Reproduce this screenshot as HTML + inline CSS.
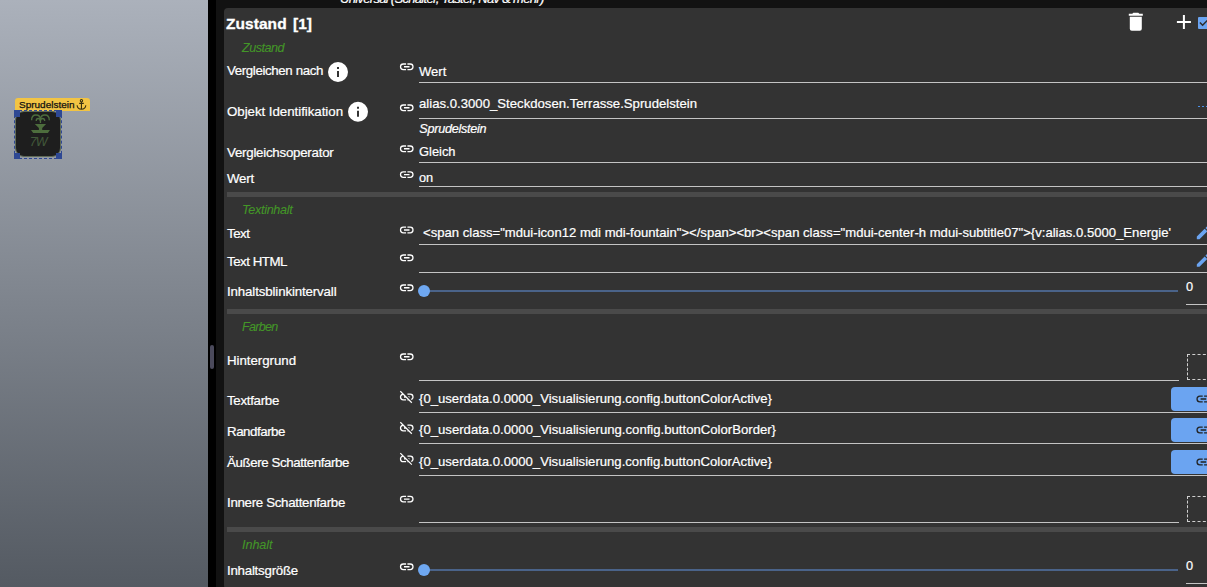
<!DOCTYPE html>
<html lang="de"><head><meta charset="utf-8"><title>Zustand</title>
<style>
html,body{margin:0;padding:0;}
body{width:1207px;height:587px;overflow:hidden;position:relative;background:#121212;font-family:"Liberation Sans",sans-serif;}
.abs,.t,.ic,.ln,.sep{position:absolute;}
.canvas{left:0;top:0;width:208px;height:587px;background:linear-gradient(to bottom,#abb1bb 0%,#545a62 100%);}
.bar{left:208px;top:0;width:8px;height:587px;background:#000;}
.thumb{left:210px;top:345px;width:4px;height:24px;border-radius:2px;background:#4b4a5c;}
.panel{left:224px;top:8px;width:990px;height:581px;background:#333;border-radius:4px;}
.t{white-space:pre;line-height:20px;height:20px;color:#fff;-webkit-text-stroke:0.22px currentColor;}
.lbl{}
.val{}
.sec{color:#439628;font-style:italic;-webkit-text-stroke:0.1px currentColor;}
.it{font-style:italic;}
.b{font-weight:bold;}
.ln{height:1px;background:#c4c4c4;}
.sep{left:227px;width:990px;height:5px;background:#4a4a4a;}
.track{position:absolute;height:2px;background:#4a6389;}
.knob{position:absolute;width:12px;height:12px;border-radius:50%;background:#6fa8f1;}
.btn{position:absolute;left:1171px;width:50px;height:24px;border-radius:4px;background:#6ba4f1;}
.dash{position:absolute;left:1187px;width:40px;height:26px;border:1px dashed #d0d0d0;box-sizing:border-box;}
</style></head>
<body>
<div class="abs canvas"></div>
<div class="abs bar"></div><div class="abs thumb"></div>
<div class="t it" style="left:340px;top:-11px;font-size:13px;letter-spacing:-0.698px;">Universal (Schalter, Taster, Nav &amp; mehr)</div>
<div class="abs panel"></div>
<div class="abs" style="left:15px;top:98px;width:75px;height:13px;background:#f2c443;border-radius:3px 3px 0 0;"></div>
<div class="t " style="left:18.8px;top:95px;font-size:9.3px;transform:scaleX(1.0738) translateY(-0.45px);transform-origin:0 50%;color:#111;-webkit-text-stroke:0.25px #111;">Sprudelstein</div>
<svg class="ic" style="left:0;top:0;width:208px;height:587px;" viewBox="0 0 208 587"><g fill="none" stroke="#3a3210" stroke-width="1.1"><circle cx="81.45" cy="100.65" r="1.15"/><path d="M81.45,101.9V109.2M79.2,103.4H83.8M77.1,105.2C77.3,107.7 79.1,109.1 81.45,109.1C83.8,109.1 85.6,107.7 85.8,105.2"/></g></svg>
<div class="abs" style="left:14px;top:110px;width:48px;height:49px;box-sizing:border-box;border:1px dashed #2e4893;"></div>
<div class="abs" style="left:15px;top:111px;width:46px;height:46px;box-sizing:border-box;background:#1e1e1e;border-radius:9px;border:1px solid #5e6a58;"></div>
<div class="abs" style="left:14px;top:110px;width:6px;height:6.5px;background:#2e4893;"></div>
<div class="abs" style="left:56px;top:110px;width:6px;height:6.5px;background:#2e4893;"></div>
<div class="abs" style="left:14px;top:152.5px;width:6px;height:6.5px;background:#2e4893;"></div>
<div class="abs" style="left:56px;top:152.5px;width:6px;height:6.5px;background:#2e4893;"></div>
<svg class="ic" style="left:0;top:0;width:208px;height:587px;" viewBox="0 0 208 587"><g fill="none" stroke="#4d6d3d" stroke-width="1.3"><path d="M31.6,120.2C31.6,116.6 33.6,115 35.9,115C38.4,115 40.4,116.6 40.4,119.5"/><path d="M49.3,120.2C49.3,116.6 47.3,115 45,115C42.5,115 40.4,116.6 40.4,119.5"/><path d="M36.2,120.9C36.2,119.3 37.2,118.5 38.2,118.5C39.5,118.5 40.4,119.4 40.4,121"/><path d="M44.7,120.9C44.7,119.3 43.7,118.5 42.7,118.5C41.4,118.5 40.4,119.4 40.4,121"/><path d="M40.45,117.6V123"/></g><path fill="#4d6d3d" d="M34.8,124.1H46.1L42.2,127.9V130.1H49.9L47.9,132.9H33.2L31,130.1H38.9V127.9Z"/></svg>
<div class="t it" style="left:29.8px;top:132px;font-size:12.5px;letter-spacing:-0.875px;color:#42593a;-webkit-text-stroke:0;">7W</div>
<div class="t b" style="left:225.9px;top:14px;font-size:15.5px;letter-spacing:0.079px;-webkit-text-stroke:0.3px #fff;word-spacing:1.8px;">Zustand [1]</div>
<div class="abs" style="left:1198px;top:17px;width:12px;height:12px;background:#6ba4f1;border-radius:1px;"></div>
<svg class="ic" style="left:1199px;top:17px;width:12px;height:12px;" viewBox="0 0 12 12"><path d="M0.9,5.5L3.6,8.2L10.6,1.2" fill="none" stroke="#2c2c2c" stroke-width="1.5"/></svg>
<div class="t sec" style="left:242px;top:38px;font-size:12.6px;letter-spacing:-0.502px;">Zustand</div>
<div class="t lbl" style="left:227px;top:61px;font-size:13.3px;letter-spacing:-0.377px;">Vergleichen nach</div>
<div class="t val" style="left:419.3px;top:62px;font-size:13.6px;transform:scaleX(0.9595);transform-origin:0 50%;">Wert</div>
<div class="ln" style="left:419px;top:82px;width:788px;"></div>
<div class="t lbl" style="left:227px;top:102px;font-size:13.3px;letter-spacing:-0.038px;">Objekt Identifikation</div>
<div class="t val" style="left:419.3px;top:94px;font-size:13.6px;transform:scaleX(0.9681);transform-origin:0 50%;">alias.0.3000_Steckdosen.Terrasse.Sprudelstein</div>
<div class="ln" style="left:419px;top:118px;width:788px;"></div>
<div class="abs" style="left:1198px;top:106px;width:2px;height:1px;background:#4a90e8;"></div>
<div class="abs" style="left:1202px;top:106px;width:2px;height:1px;background:#4a90e8;"></div>
<div class="abs" style="left:1206px;top:106px;width:2px;height:1px;background:#4a90e8;"></div>
<div class="t it" style="left:419.3px;top:119px;font-size:12.6px;letter-spacing:-0.251px;">Sprudelstein</div>
<div class="t lbl" style="left:227px;top:143px;font-size:13.3px;letter-spacing:-0.243px;">Vergleichsoperator</div>
<div class="t val" style="left:419.3px;top:142px;font-size:13.6px;transform:scaleX(0.9473);transform-origin:0 50%;">Gleich</div>
<div class="ln" style="left:419px;top:162px;width:788px;"></div>
<div class="t lbl" style="left:227px;top:169px;font-size:13.3px;letter-spacing:-0.207px;">Wert</div>
<div class="t val" style="left:419.3px;top:168px;font-size:13.6px;transform:scaleX(0.9400);transform-origin:0 50%;">on</div>
<div class="ln" style="left:419px;top:186px;width:788px;"></div>
<div class="sep" style="top:192px;"></div>
<div class="t sec" style="left:242px;top:200px;font-size:12.6px;letter-spacing:-0.295px;">Textinhalt</div>
<div class="t lbl" style="left:227px;top:224px;font-size:13.3px;letter-spacing:-0.498px;">Text</div>
<div class="t val" style="left:423px;top:223px;font-size:13.6px;transform:scaleX(0.9639);transform-origin:0 50%;">&lt;span class="mdui-icon12 mdi mdi-fountain"&gt;&lt;/span&gt;&lt;br&gt;&lt;span class="mdui-center-h mdui-subtitle07"&gt;{v:alias.0.5000_Energie'</div>
<div class="ln" style="left:419px;top:244px;width:788px;"></div>
<div class="t lbl" style="left:227px;top:252px;font-size:13.3px;letter-spacing:-0.476px;">Text HTML</div>
<div class="ln" style="left:419px;top:272px;width:788px;"></div>
<div class="t lbl" style="left:227px;top:282px;font-size:13.3px;letter-spacing:-0.135px;">Inhaltsblinkintervall</div>
<div class="track" style="left:424px;top:290px;width:754px;"></div><div class="knob" style="left:418px;top:285px;"></div>
<div class="t val" style="left:1186px;top:277px;font-size:13.6px;transform:scaleX(0.9400);transform-origin:0 50%;">0</div>
<div class="ln" style="left:1186px;top:304px;width:21px;"></div>
<div class="sep" style="top:309px;"></div>
<div class="t sec" style="left:242px;top:317px;font-size:12.6px;letter-spacing:-0.734px;">Farben</div>
<div class="t lbl" style="left:227px;top:351px;font-size:13.3px;letter-spacing:-0.044px;">Hintergrund</div>
<div class="ln" style="left:419px;top:380px;width:760px;"></div>
<div class="dash" style="top:354px;"></div>
<div class="t lbl" style="left:227px;top:391px;font-size:13.3px;letter-spacing:-0.300px;">Textfarbe</div>
<div class="ln" style="left:419px;top:412px;width:788px;"></div>
<div class="btn" style="top:387px;"></div>
<div class="t lbl" style="left:227px;top:422px;font-size:13.3px;letter-spacing:-0.457px;">Randfarbe</div>
<div class="ln" style="left:419px;top:443px;width:788px;"></div>
<div class="btn" style="top:418px;"></div>
<div class="t lbl" style="left:227px;top:453px;font-size:13.3px;letter-spacing:-0.405px;">Äußere Schattenfarbe</div>
<div class="ln" style="left:419px;top:475px;width:788px;"></div>
<div class="btn" style="top:450px;"></div>
<div class="t val" style="left:419.3px;top:389px;font-size:13.6px;transform:scaleX(0.9657);transform-origin:0 50%;">{0_userdata.0.0000_Visualisierung.config.buttonColorActive}</div>
<div class="t val" style="left:419.3px;top:420px;font-size:13.6px;transform:scaleX(0.9667);transform-origin:0 50%;">{0_userdata.0.0000_Visualisierung.config.buttonColorBorder}</div>
<div class="t val" style="left:419.3px;top:452px;font-size:13.6px;transform:scaleX(0.9657);transform-origin:0 50%;">{0_userdata.0.0000_Visualisierung.config.buttonColorActive}</div>
<div class="t lbl" style="left:227px;top:493px;font-size:13.3px;letter-spacing:-0.310px;">Innere Schattenfarbe</div>
<div class="ln" style="left:419px;top:522px;width:760px;"></div>
<div class="dash" style="top:496px;"></div>
<div class="sep" style="top:527px;"></div>
<div class="t sec" style="left:242px;top:535px;font-size:12.6px;letter-spacing:-0.052px;">Inhalt</div>
<div class="t lbl" style="left:227px;top:561px;font-size:13.3px;letter-spacing:-0.243px;">Inhaltsgröße</div>
<div class="track" style="left:424px;top:569px;width:754px;"></div><div class="knob" style="left:418px;top:564px;"></div>
<div class="t val" style="left:1186px;top:556px;font-size:13.6px;transform:scaleX(0.9400);transform-origin:0 50%;">0</div>
<div class="ln" style="left:1186px;top:583px;width:21px;"></div>
<svg class="ic" style="left:0;top:0;width:1207px;height:587px;" viewBox="0 0 1207 587"><g transform="translate(1123.80,9.80) scale(1.0000)"><path fill="#fff" d="M19,4H15.5L14.5,3H9.5L8.5,4H5V6H19M6,19A2,2 0 0,0 8,21H16A2,2 0 0,0 18,19V7H6V19Z"/></g>
<g transform="translate(1171.90,9.90) scale(1.0000)"><path fill="#fff" d="M19,13H13V19H11V13H5V11H11V5H13V11H19V13Z"/></g>
<g transform="translate(326.00,60.00) scale(1.0000)"><path fill="#fff" d="M13,9H11V7H13M13,17H11V11H13M12,2A10,10 0 0,0 2,12A10,10 0 0,0 12,22A10,10 0 0,0 22,12A10,10 0 0,0 12,2Z"/></g>
<g transform="translate(398.50,58.55) scale(0.6875)"><path fill="#fff" d="M3.9,12C3.9,10.29 5.29,8.9 7,8.9H11V7H7A5,5 0 0,0 2,12A5,5 0 0,0 7,17H11V15.1H7C5.29,15.1 3.9,13.71 3.9,12M8,13H16V11H8V13M17,7H13V8.9H17C18.71,8.9 20.1,10.29 20.1,12C20.1,13.71 18.71,15.1 17,15.1H13V17H17A5,5 0 0,0 22,12A5,5 0 0,0 17,7Z"/></g>
<g transform="translate(346.00,99.80) scale(1.0000)"><path fill="#fff" d="M13,9H11V7H13M13,17H11V11H13M12,2A10,10 0 0,0 2,12A10,10 0 0,0 12,22A10,10 0 0,0 22,12A10,10 0 0,0 12,2Z"/></g>
<g transform="translate(398.50,99.55) scale(0.6875)"><path fill="#fff" d="M3.9,12C3.9,10.29 5.29,8.9 7,8.9H11V7H7A5,5 0 0,0 2,12A5,5 0 0,0 7,17H11V15.1H7C5.29,15.1 3.9,13.71 3.9,12M8,13H16V11H8V13M17,7H13V8.9H17C18.71,8.9 20.1,10.29 20.1,12C20.1,13.71 18.71,15.1 17,15.1H13V17H17A5,5 0 0,0 22,12A5,5 0 0,0 17,7Z"/></g>
<g transform="translate(398.50,140.55) scale(0.6875)"><path fill="#fff" d="M3.9,12C3.9,10.29 5.29,8.9 7,8.9H11V7H7A5,5 0 0,0 2,12A5,5 0 0,0 7,17H11V15.1H7C5.29,15.1 3.9,13.71 3.9,12M8,13H16V11H8V13M17,7H13V8.9H17C18.71,8.9 20.1,10.29 20.1,12C20.1,13.71 18.71,15.1 17,15.1H13V17H17A5,5 0 0,0 22,12A5,5 0 0,0 17,7Z"/></g>
<g transform="translate(398.50,166.35) scale(0.6875)"><path fill="#fff" d="M3.9,12C3.9,10.29 5.29,8.9 7,8.9H11V7H7A5,5 0 0,0 2,12A5,5 0 0,0 7,17H11V15.1H7C5.29,15.1 3.9,13.71 3.9,12M8,13H16V11H8V13M17,7H13V8.9H17C18.71,8.9 20.1,10.29 20.1,12C20.1,13.71 18.71,15.1 17,15.1H13V17H17A5,5 0 0,0 22,12A5,5 0 0,0 17,7Z"/></g>
<g transform="translate(398.50,221.75) scale(0.6875)"><path fill="#fff" d="M3.9,12C3.9,10.29 5.29,8.9 7,8.9H11V7H7A5,5 0 0,0 2,12A5,5 0 0,0 7,17H11V15.1H7C5.29,15.1 3.9,13.71 3.9,12M8,13H16V11H8V13M17,7H13V8.9H17C18.71,8.9 20.1,10.29 20.1,12C20.1,13.71 18.71,15.1 17,15.1H13V17H17A5,5 0 0,0 22,12A5,5 0 0,0 17,7Z"/></g>
<g transform="translate(1194.70,224.30) scale(0.7083)"><path fill="#6ba4f1" d="M20.71,7.04C21.1,6.65 21.1,6 20.71,5.63L18.37,3.29C18,2.9 17.35,2.9 16.96,3.29L15.12,5.12L18.87,8.87M3,17.25V21H6.75L17.81,9.93L14.06,6.18L3,17.25Z"/></g>
<g transform="translate(398.50,249.55) scale(0.6875)"><path fill="#fff" d="M3.9,12C3.9,10.29 5.29,8.9 7,8.9H11V7H7A5,5 0 0,0 2,12A5,5 0 0,0 7,17H11V15.1H7C5.29,15.1 3.9,13.71 3.9,12M8,13H16V11H8V13M17,7H13V8.9H17C18.71,8.9 20.1,10.29 20.1,12C20.1,13.71 18.71,15.1 17,15.1H13V17H17A5,5 0 0,0 22,12A5,5 0 0,0 17,7Z"/></g>
<g transform="translate(1194.70,252.00) scale(0.7083)"><path fill="#6ba4f1" d="M20.71,7.04C21.1,6.65 21.1,6 20.71,5.63L18.37,3.29C18,2.9 17.35,2.9 16.96,3.29L15.12,5.12L18.87,8.87M3,17.25V21H6.75L17.81,9.93L14.06,6.18L3,17.25Z"/></g>
<g transform="translate(398.50,279.55) scale(0.6875)"><path fill="#fff" d="M3.9,12C3.9,10.29 5.29,8.9 7,8.9H11V7H7A5,5 0 0,0 2,12A5,5 0 0,0 7,17H11V15.1H7C5.29,15.1 3.9,13.71 3.9,12M8,13H16V11H8V13M17,7H13V8.9H17C18.71,8.9 20.1,10.29 20.1,12C20.1,13.71 18.71,15.1 17,15.1H13V17H17A5,5 0 0,0 22,12A5,5 0 0,0 17,7Z"/></g>
<g transform="translate(398.50,348.55) scale(0.6875)"><path fill="#fff" d="M3.9,12C3.9,10.29 5.29,8.9 7,8.9H11V7H7A5,5 0 0,0 2,12A5,5 0 0,0 7,17H11V15.1H7C5.29,15.1 3.9,13.71 3.9,12M8,13H16V11H8V13M17,7H13V8.9H17C18.71,8.9 20.1,10.29 20.1,12C20.1,13.71 18.71,15.1 17,15.1H13V17H17A5,5 0 0,0 22,12A5,5 0 0,0 17,7Z"/></g>
<g transform="translate(398.50,388.75) scale(0.6875)"><path fill="#fff" d="M17,7H13V8.9H17C18.71,8.9 20.1,10.29 20.1,12C20.1,13.43 19.12,14.63 17.79,14.98L19.25,16.44C20.88,15.61 22,13.95 22,12A5,5 0 0,0 17,7M16,11H13.81L15.81,13H16V11M2,4.27L5.11,7.38C3.29,8.12 2,9.91 2,12A5,5 0 0,0 7,17H11V15.1H7C5.29,15.1 3.9,13.71 3.9,12C3.9,10.41 5.11,9.1 6.66,8.93L8.73,11H8V13H10.73L13,15.27V17H14.73L18.74,21L20,19.74L3.27,3L2,4.27Z"/></g>
<g transform="translate(1195.00,390.60) scale(0.7000)"><path fill="#222" d="M3.9,12C3.9,10.29 5.29,8.9 7,8.9H11V7H7A5,5 0 0,0 2,12A5,5 0 0,0 7,17H11V15.1H7C5.29,15.1 3.9,13.71 3.9,12M8,13H16V11H8V13M17,7H13V8.9H17C18.71,8.9 20.1,10.29 20.1,12C20.1,13.71 18.71,15.1 17,15.1H13V17H17A5,5 0 0,0 22,12A5,5 0 0,0 17,7Z"/></g>
<g transform="translate(398.50,419.75) scale(0.6875)"><path fill="#fff" d="M17,7H13V8.9H17C18.71,8.9 20.1,10.29 20.1,12C20.1,13.43 19.12,14.63 17.79,14.98L19.25,16.44C20.88,15.61 22,13.95 22,12A5,5 0 0,0 17,7M16,11H13.81L15.81,13H16V11M2,4.27L5.11,7.38C3.29,8.12 2,9.91 2,12A5,5 0 0,0 7,17H11V15.1H7C5.29,15.1 3.9,13.71 3.9,12C3.9,10.41 5.11,9.1 6.66,8.93L8.73,11H8V13H10.73L13,15.27V17H14.73L18.74,21L20,19.74L3.27,3L2,4.27Z"/></g>
<g transform="translate(1195.00,421.60) scale(0.7000)"><path fill="#222" d="M3.9,12C3.9,10.29 5.29,8.9 7,8.9H11V7H7A5,5 0 0,0 2,12A5,5 0 0,0 7,17H11V15.1H7C5.29,15.1 3.9,13.71 3.9,12M8,13H16V11H8V13M17,7H13V8.9H17C18.71,8.9 20.1,10.29 20.1,12C20.1,13.71 18.71,15.1 17,15.1H13V17H17A5,5 0 0,0 22,12A5,5 0 0,0 17,7Z"/></g>
<g transform="translate(398.50,450.65) scale(0.6875)"><path fill="#fff" d="M17,7H13V8.9H17C18.71,8.9 20.1,10.29 20.1,12C20.1,13.43 19.12,14.63 17.79,14.98L19.25,16.44C20.88,15.61 22,13.95 22,12A5,5 0 0,0 17,7M16,11H13.81L15.81,13H16V11M2,4.27L5.11,7.38C3.29,8.12 2,9.91 2,12A5,5 0 0,0 7,17H11V15.1H7C5.29,15.1 3.9,13.71 3.9,12C3.9,10.41 5.11,9.1 6.66,8.93L8.73,11H8V13H10.73L13,15.27V17H14.73L18.74,21L20,19.74L3.27,3L2,4.27Z"/></g>
<g transform="translate(1195.00,453.60) scale(0.7000)"><path fill="#222" d="M3.9,12C3.9,10.29 5.29,8.9 7,8.9H11V7H7A5,5 0 0,0 2,12A5,5 0 0,0 7,17H11V15.1H7C5.29,15.1 3.9,13.71 3.9,12M8,13H16V11H8V13M17,7H13V8.9H17C18.71,8.9 20.1,10.29 20.1,12C20.1,13.71 18.71,15.1 17,15.1H13V17H17A5,5 0 0,0 22,12A5,5 0 0,0 17,7Z"/></g>
<g transform="translate(398.50,490.85) scale(0.6875)"><path fill="#fff" d="M3.9,12C3.9,10.29 5.29,8.9 7,8.9H11V7H7A5,5 0 0,0 2,12A5,5 0 0,0 7,17H11V15.1H7C5.29,15.1 3.9,13.71 3.9,12M8,13H16V11H8V13M17,7H13V8.9H17C18.71,8.9 20.1,10.29 20.1,12C20.1,13.71 18.71,15.1 17,15.1H13V17H17A5,5 0 0,0 22,12A5,5 0 0,0 17,7Z"/></g>
<g transform="translate(398.50,558.55) scale(0.6875)"><path fill="#fff" d="M3.9,12C3.9,10.29 5.29,8.9 7,8.9H11V7H7A5,5 0 0,0 2,12A5,5 0 0,0 7,17H11V15.1H7C5.29,15.1 3.9,13.71 3.9,12M8,13H16V11H8V13M17,7H13V8.9H17C18.71,8.9 20.1,10.29 20.1,12C20.1,13.71 18.71,15.1 17,15.1H13V17H17A5,5 0 0,0 22,12A5,5 0 0,0 17,7Z"/></g></svg>
</body></html>
